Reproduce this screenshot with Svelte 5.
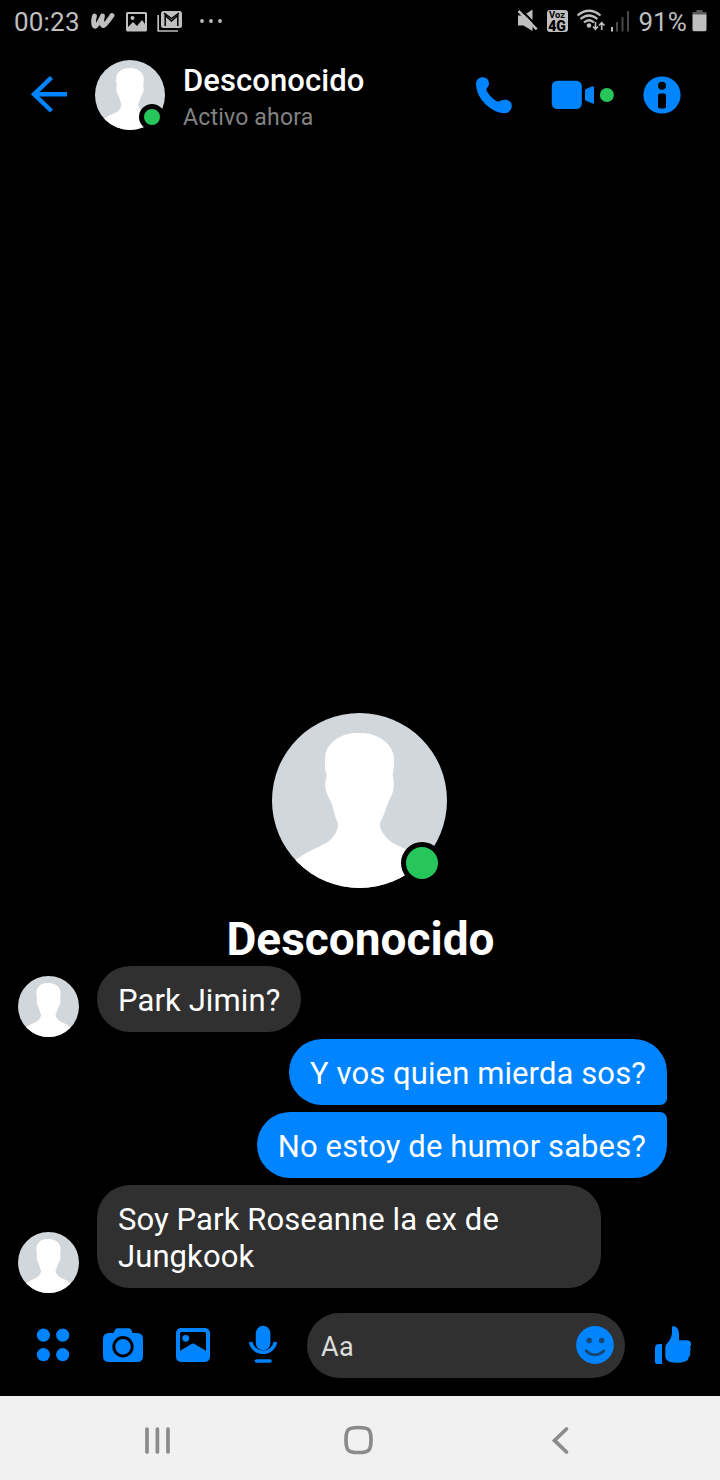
<script>
  const contact = "Desconocido";

  // consecutive messages of one sender share a group
  const groups = [
    { mine: false, messages: ["Park Jimin?"] },
    { mine: true, messages: ["Y vos quien mierda sos?", "No estoy de humor sabes?"] },
    { mine: false, messages: ["Soy Park Roseanne la ex de Jungkook"] },
  ];
</script>

{#snippet avatar()}
  <svg class="avatar" viewBox="0 0 175 175">
    <rect width="175" height="175" fill="#d2d7db" />
    <path
      fill="#fff"
      d="M88 20C104 19 121 30 122 45L121.800 56Q120 62 121 64Q123.500 75 119 84C115 90 113 101 108 110Q107 114 111 120C117 131 131 134 143 141C151 146 158 152 166 162V175H8V163C16 150 27 144 40 137C50 132 58 130 63 121Q67 114 65.700 110C62 101 61 92 57 85Q51 74 54.500 64Q55 61 53 56V45C54 29 70 19 88 20Z"
    />
  </svg>
{/snippet}

<div class="screen">
  <div class="status">
    <span class="time">00:23</span>
    <svg class="wattpad" width="24" height="20" viewBox="91.500 11 24 20">
      <path d="M95 16C93.500 21 94 26 95.500 26.300C98 26 101 20 103 16C101.500 21 102.500 26 104 25.500C107 24 110 19 112.500 15.500" />
    </svg>
    <svg class="photo" width="22" height="22" viewBox="126 11 22 22">
      <path fill-rule="evenodd" d="M127.500 12H145.500Q147 12 147 13.500V30Q147 31.500 145.500 31.500H127.500Q126 31.500 126 30V13.500Q126 12 127.500 12ZM128 14V27L133 22L137 26L142 20L145 24V14Z" />
      <circle cx="132.500" cy="18" r="2" />
    </svg>
    <svg class="gmail" width="26" height="24" viewBox="157 10 26 24">
      <path d="M158.200 15V31H178" fill="none" stroke="#bfbfbf" stroke-width="1.700" />
      <rect x="161" y="11" width="21" height="17" rx="2.500" />
      <path d="M165.200 26V15.500L171.500 21L177.800 15.500V26" fill="none" stroke="#000" stroke-width="1.500" />
      <path d="M164 13L171.500 18.500L179 13" fill="none" stroke="#000" stroke-width="1.500" />
    </svg>
    <svg class="more" width="24" height="8" viewBox="199 17 24 8">
      <circle cx="202" cy="21" r="1.900" />
      <circle cx="211" cy="21" r="1.900" />
      <circle cx="220" cy="21" r="1.900" />
    </svg>

    <svg class="mute" width="20" height="24" viewBox="518 9 20 24">
      <path d="M518 15.500H523.500L532.500 9.500V31L523.500 25.500H518Z" />
      <path d="M520 9L539 28" stroke="#000" stroke-width="2.200" />
      <path d="M518.500 11L536.700 29.300" stroke="#bfbfbf" stroke-width="2.500" />
    </svg>
    <div class="volte"><span>Voz</span><b>4G</b></div>
    <svg class="wifi" width="30" height="24" viewBox="576 9 30 24">
      <g fill="none" stroke="#bfbfbf" stroke-width="2.200">
        <path d="M577.500 15.500Q589 6 600.500 15.500" />
        <path d="M580.500 19Q589 12 597.500 19" />
        <path d="M584 22.500Q589 18 594 22.500" />
        <path d="M595.500 22V29M593 26.500L595.500 29.300L598 26.500M601.700 30V23M599 25.500L601.700 22.600L604.500 25.500" stroke-width="1.600" />
      </g>
      <circle cx="589" cy="25.500" r="2.300" />
    </svg>
    <svg class="signal" width="20" height="24" viewBox="610 9 20 24">
      <rect x="611" y="27" width="2" height="4.500" />
      <g fill="#484848">
        <rect x="616" y="22" width="2" height="9.500" />
        <rect x="621.500" y="17" width="2" height="14.500" />
        <rect x="627" y="11" width="2" height="20.500" />
      </g>
    </svg>
    <span class="percent">91%</span>
    <svg class="battery" width="15" height="24" viewBox="691.500 9 15 24">
      <path d="M696 10H702V12H706V15H692V12H696Z" fill="#5a5a5a" />
      <path d="M692 14.500H706V29.500Q706 31.300 704.500 31.300H693.500Q692 31.300 692 29.500Z" />
    </svg>
  </div>

  <header>
    <svg class="back" width="38" height="38" viewBox="30 76 38 38">
      <path d="M67 94.300H34M51.500 77.500L34 94.300L51.500 111" />
    </svg>
    <div class="picture small">
      {@render avatar()}
      <i class="online"></i>
    </div>
    <div class="who">
      <h1>{contact}</h1>
      <p>Activo ahora</p>
    </div>
    <svg class="call" width="38" height="38" viewBox="475 76 38 38">
      <path d="M476.200 83.500C476 77 484 75.500 487.300 79C489.700 82 489.500 85.500 487 88Q486 89.500 486.800 91C489 95.500 493.500 99.800 497.500 101.400Q499 101.800 500 101C503.500 99 508 99.500 510.500 102C513.500 105.500 511 113 505 113C492 113.500 475.500 98.500 476.200 83.500Z" />
    </svg>
    <svg class="video" width="64" height="30" viewBox="551 80 64 30">
      <rect x="551.800" y="80.700" width="30" height="28.400" rx="5.500" />
      <path d="M585 90.500Q585 89.500 586 89L592.500 86.300Q594 86 594 87.500V102.500Q594 104 592.500 103.500L586 100.700Q585 100.300 585 99Z" />
      <circle cx="606.900" cy="95" r="7" fill="#26c65b" />
    </svg>
    <svg class="info" width="38" height="38" viewBox="643 76 38 38">
      <circle cx="662" cy="95" r="18.600" />
      <circle cx="662" cy="85.800" r="4" fill="#000" />
      <rect x="658" y="93.500" width="8" height="15" rx="2" fill="#000" />
    </svg>
  </header>

  <main>
    <div class="picture large">
      {@render avatar()}
      <i class="online"></i>
    </div>
    <h2>{contact}</h2>

    {#each groups as group}
      <div class="group" class:mine={group.mine}>
        {#if !group.mine}
          <div class="sender">{@render avatar()}</div>
        {/if}
        <div class="bubbles">
          {#each group.messages as message}
            <p>{message}</p>
          {/each}
        </div>
      </div>
    {/each}
  </main>

  <footer>
    <svg class="apps" width="34" height="34" viewBox="36 1328 34 34">
      <circle cx="43.400" cy="1335.100" r="6.600" />
      <circle cx="62.700" cy="1335.100" r="6.600" />
      <circle cx="43.400" cy="1354.600" r="6.600" />
      <circle cx="62.700" cy="1354.600" r="6.600" />
    </svg>
    <svg class="camera" width="42" height="36" viewBox="102 1327 42 36">
      <path d="M109 1333H113.500L115 1329.800Q115.700 1328.300 117.500 1328.300H129Q130.700 1328.300 131.300 1329.800L132.700 1333H137Q143 1333 143 1339V1356Q143 1362 137 1362H109Q103 1362 103 1356V1339Q103 1333 109 1333Z" />
      <circle cx="123" cy="1346.800" r="9.200" stroke="#000" stroke-width="3" />
    </svg>
    <svg class="gallery" width="36" height="36" viewBox="175 1327 36 36">
      <rect x="176" y="1328" width="34" height="34" rx="5" />
      <path d="M180 1333.500Q180 1332 181.500 1332H204.500Q206 1332 206 1333.500V1350.700L194 1343.800Q193 1343.200 192 1343.800L180 1350.700Z" fill="#000" />
      <circle cx="185.700" cy="1338.300" r="3.400" />
    </svg>
    <svg class="mic" width="30" height="40" viewBox="248 1325 30 40">
      <rect x="255.800" y="1325.800" width="14.600" height="24.500" rx="7.300" />
      <path d="M250.700 1342A12.500 12.200 0 0 0 275.400 1342" fill="none" stroke="#0084ff" stroke-width="3.600" />
      <path d="M256.500 1361H270" stroke="#0084ff" stroke-width="3.600" stroke-linecap="round" />
    </svg>
    <div class="field">
      <span>Aa</span>
      <svg width="38" height="38" viewBox="576 1326 38 38">
        <circle cx="595" cy="1345" r="18.900" />
        <circle cx="589.200" cy="1340.500" r="2.700" fill="#17466f" />
        <circle cx="601.700" cy="1340.500" r="2.700" fill="#17466f" />
        <path d="M586 1350.700Q595 1359 604 1350.700" fill="none" stroke="#17466f" stroke-width="2.800" stroke-linecap="round" />
      </svg>
    </div>
    <svg class="like" width="38" height="40" viewBox="654 1325 38 40">
      <path d="M655 1348Q655 1344 659 1344H662V1364H657.500Q655 1364 655 1361.500Z" />
      <path d="M672 1327.500Q672 1326 673.500 1326C677 1326.500 679 1330 679 1334V1340.300H686Q691.500 1340.300 691 1344.500Q691 1346 690 1347Q691.500 1349 690 1352Q691 1355 688.700 1357Q688.500 1360.500 685 1361.500C680 1363.500 672 1363 668.500 1361.300Q665.300 1359.500 665.300 1356V1348.500C665.300 1344 668 1343 670 1339.500Q671.500 1337 672 1333Z" />
    </svg>
  </footer>

  <nav>
    <svg class="recents" width="28" height="30" viewBox="143 1425 28 30">
      <path d="M147 1429V1452M157.400 1429V1452M168 1429V1452" />
    </svg>
    <svg class="home" width="32" height="32" viewBox="342 1424.500 32 32">
      <path d="M358.500 1428C369 1428 371 1430 371 1440.500S369 1453 358.500 1453S346 1451 346 1440.500S348 1428 358.500 1428Z" />
    </svg>
    <svg class="return" width="20" height="30" viewBox="550 1425 20 30">
      <path d="M566.500 1429L554.500 1440.400L566.500 1452" />
    </svg>
  </nav>
</div>

<style>
  :global(body) {
    margin: 0;
    background: #000;
  }

  .screen {
    width: 720px;
    height: 1480px;
    display: flex;
    flex-direction: column;
    overflow: hidden;
    background: #000;
    color: #fff;
    font-family: Roboto, sans-serif;
  }

  svg {
    display: block;
    flex: none;
  }

  h1,
  h2,
  p {
    margin: 0;
  }

  /* status bar */
  .status {
    height: 42px;
    display: flex;
    align-items: center;
    padding: 0 13px 0 14px;
    box-sizing: border-box;
    color: #bfbfbf;
    fill: #bfbfbf;
    font-size: 26px;
  }

  .time {
    width: 77px;
    line-height: 44px;
    padding-top: 2px;
    letter-spacing: 0.2px;
  }

  .wattpad {
    fill: none;
    stroke: #bfbfbf;
    stroke-width: 4.8;
    stroke-linecap: round;
    stroke-linejoin: round;
  }

  .photo {
    margin: 2px 9px 0 11px;
  }

  .gmail {
    margin-top: 2px;
  }

  .more {
    margin-left: 16px;
  }

  .mute {
    margin-left: auto;
  }

  .volte {
    width: 21px;
    height: 22px;
    margin: 0 8px 0 9px;
    border-radius: 3px;
    background: #bfbfbf;
    color: #000;
    text-align: center;
    font-weight: 700;
  }

  .volte span,
  .volte b {
    display: block;
    font-size: 9.5px;
    line-height: 10px;
  }

  .volte b {
    font-size: 14px;
    line-height: 12px;
  }

  .signal {
    margin-left: 4px;
  }

  .percent {
    width: 53.5px;
    margin-left: 9px;
    padding-top: 2px;
  }

  /* header */
  header {
    height: 106px;
    display: flex;
    align-items: center;
    padding: 0 39px 0 30px;
    fill: #0084ff;
  }

  .back {
    fill: none;
    stroke: #0084ff;
    stroke-width: 4.4;
  }

  .picture {
    position: relative;
    flex: none;
  }

  .avatar {
    width: 100%;
    height: 100%;
    border-radius: 50%;
  }

  .online {
    position: absolute;
    border: 5px solid #000;
    border-radius: 50%;
    background: #26c65b;
  }

  .small {
    width: 70px;
    height: 70px;
    margin: 0 18px 0 27px;
  }

  .small .online {
    width: 16px;
    height: 16px;
    right: 0;
    bottom: 0;
  }

  .who {
    width: 292px;
    padding-top: 7px;
  }

  h1 {
    font-size: 31px;
    font-weight: 500;
    line-height: 38px;
    letter-spacing: 0.08px;
  }

  .who p {
    color: #828282;
    font-size: 23px;
    line-height: 35px;
    letter-spacing: 0.2px;
  }

  .video {
    margin: 0 28px 0 38px;
  }

  /* conversation */
  main {
    flex: 1;
    display: flex;
    flex-direction: column;
    justify-content: flex-end;
    gap: 7px;
    padding-bottom: 8px;
  }

  .large {
    width: 175px;
    height: 175px;
    margin: 0 auto 16px 272px;
  }

  .large .online {
    width: 32px;
    height: 32px;
    right: 4px;
    bottom: 4px;
  }

  h2 {
    padding-left: 1px;
    text-align: center;
    font-size: 46px;
    font-weight: 700;
    line-height: 56px;
    margin-bottom: -8px;
  }

  .group {
    display: flex;
    align-items: flex-end;
    padding: 0 53px 0 18px;
  }

  .sender {
    width: 61px;
    height: 61px;
    margin: 0 18px -5px 0;
  }

  .bubbles {
    display: flex;
    flex-direction: column;
    align-items: flex-start;
    gap: 7px;
  }

  .bubbles p {
    max-width: 462px;
    padding: 16px 21px 13px;
    border-radius: 33px;
    background: #303030;
    font-size: 31px;
    line-height: 37px;
    letter-spacing: 0.1px;
  }

  .mine {
    justify-content: flex-end;
  }

  .mine .bubbles {
    align-items: flex-end;
  }

  .mine p {
    background: #0084ff;
  }

  .mine p:first-child {
    border-bottom-right-radius: 7px;
  }

  .mine p:last-child {
    border-top-right-radius: 7px;
  }

  /* composer */
  footer {
    height: 100px;
    display: flex;
    align-items: center;
    padding: 0 28px 2px 36px;
    box-sizing: border-box;
    fill: #0084ff;
  }

  .camera {
    margin: 0 31px 0 32px;
  }

  .mic {
    margin: 0 29px 0 37px;
  }

  .field {
    width: 318px;
    height: 65px;
    margin-right: 29px;
    padding: 0 11px 0 14px;
    box-sizing: border-box;
    display: flex;
    align-items: center;
    justify-content: space-between;
    border-radius: 33px;
    background: #303030;
    color: #dcdcdc;
    font-size: 27px;
  }

  .field span {
    padding-top: 3px;
    letter-spacing: 0.3px;
  }

  /* system navigation */
  nav {
    height: 84px;
    display: flex;
    align-items: center;
    padding: 4px 150px 0 143px;
    box-sizing: border-box;
    background: #f1f1f1;
    fill: none;
    stroke: #8b8b8b;
    stroke-width: 3.7;
    stroke-linecap: round;
  }

  .home {
    margin: 0 176px 0 171px;
  }
</style>
